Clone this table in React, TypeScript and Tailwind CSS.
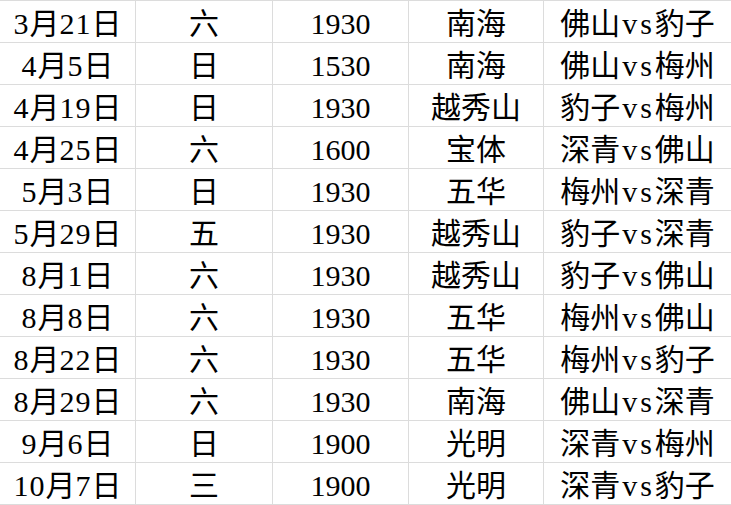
import React from "react";

const rows: [string, string, string, string, string][] = [
  ["3月21日", "六", "1930", "南海", "佛山vs豹子"],
  ["4月5日", "日", "1530", "南海", "佛山vs梅州"],
  ["4月19日", "日", "1930", "越秀山", "豹子vs梅州"],
  ["4月25日", "六", "1600", "宝体", "深青vs佛山"],
  ["5月3日", "日", "1930", "五华", "梅州vs深青"],
  ["5月29日", "五", "1930", "越秀山", "豹子vs深青"],
  ["8月1日", "六", "1930", "越秀山", "豹子vs佛山"],
  ["8月8日", "六", "1930", "五华", "梅州vs佛山"],
  ["8月22日", "六", "1930", "五华", "梅州vs豹子"],
  ["8月29日", "六", "1930", "南海", "佛山vs深青"],
  ["9月6日", "日", "1900", "光明", "深青vs梅州"],
  ["10月7日", "三", "1900", "光明", "深青vs豹子"],
];

function Cell({ text, j }: { text: string; j: number }) {
  let content: React.ReactNode = text;
  if (j === 4) {
    const [a, b] = text.split("vs");
    content = (
      <>
        {a}
        <span className="tracking-[3px] pl-[2px]">vs</span>
        {b}
      </>
    );
  } else if (j === 0) {
    content = text.split(/(\d+)/).map((p, k) =>
      /\d/.test(p) ? (
        <span key={k} className="tracking-[1px]">
          {p}
        </span>
      ) : (
        <span key={k}>{p}</span>
      )
    );
  }
  return (
    <div className="h-[42px] flex items-center justify-center pt-[5px] border-b border-r border-[#dcdcdc] text-[30px] leading-none whitespace-nowrap">
      {content}
    </div>
  );
}

export default function App() {
  return (
    <div
      className="w-[731px] h-[505px] overflow-hidden bg-white text-black"
      style={{ fontFamily: '"Liberation Serif", "Noto Sans CJK SC", serif' }}
    >
      <div className="grid grid-cols-[136px_137px_136px_135px_188px] border-t border-[#dcdcdc]">
        {rows.map((r, i) =>
          r.map((c, j) => <Cell key={`${i}-${j}`} text={c} j={j} />)
        )}
      </div>
    </div>
  );
}
